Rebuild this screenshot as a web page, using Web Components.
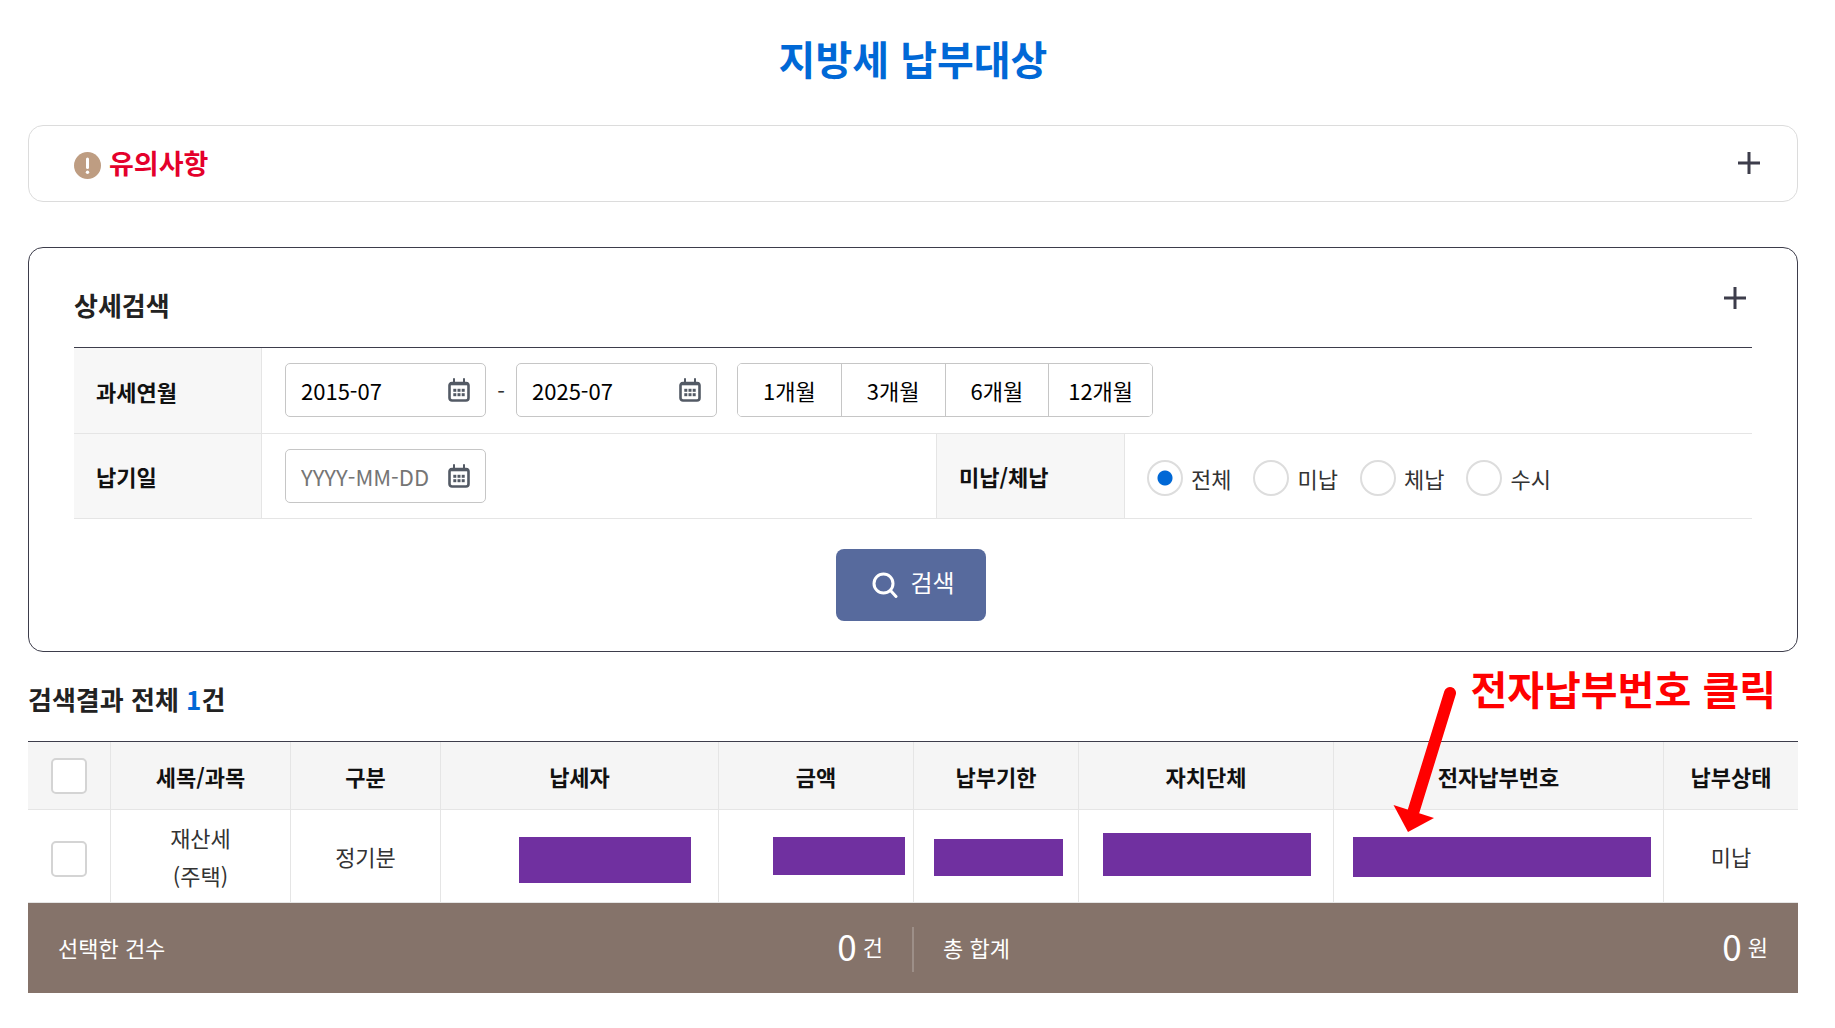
<!DOCTYPE html>
<html lang="ko">
<head>
<meta charset="utf-8">
<title>지방세 납부대상</title>
<style>
  body { margin: 0; background: #fff; color: #333; font: 22px/32px "Noto Sans CJK KR", "Noto Sans", sans-serif; }
</style>
</head>
<body>
<tax-page>
  <page-title slot="title">지방세 납부대상</page-title>
  <notice-panel>유의사항</notice-panel>
  <search-panel></search-panel>
  <result-section></result-section>
</tax-page>

<script>
  const define = (name, html, setup) => {
    const template = document.createElement('template');
    template.innerHTML = html;
    customElements.define(name, class extends HTMLElement {
      constructor() {
        super();
        this.attachShadow({ mode: 'open' }).append(template.content.cloneNode(true));
      }
      connectedCallback() {
        if (setup) setup(this, this.shadowRoot);
      }
    });
  };

  define('tax-page', `
    <style>
      :host { display: block; padding: 0 37px 35px 28px; }
      main { display: flex; flex-direction: column; }
    </style>
    <main><slot name="title"></slot><slot></slot></main>
  `);

  define('page-title', `
    <style>
      :host { display: block; padding: 28px 0 37px; text-align: center; }
      h1 { margin: 0; font-size: 40px; line-height: 60px; font-weight: 700; color: #0068d6; }
    </style>
    <h1><slot></slot></h1>
  `);

  define('plus-button', `
    <style>
      :host { display: block; }
      button { display: block; width: 22px; height: 22px; margin: 0; padding: 0; border: 0; background: none; cursor: pointer; }
      svg { display: block; }
    </style>
    <button type="button" aria-label="펼치기">
      <svg width="22" height="22" viewBox="0 0 22 22" stroke="#3d3d4b" stroke-width="3" fill="none"><path d="M0 11H22M11 0V22"/></svg>
    </button>
  `);

  define('notice-panel', `
    <style>
      :host { display: flex; align-items: center; box-sizing: border-box; height: 77px; margin-bottom: 45px; padding: 0 37px 2px 45px; border: 1px solid #dcdcdc; border-radius: 15px; }
      svg { display: block; margin: 5px 8px 0 0; }
      h2 { margin: 0; font-size: 27px; line-height: 40px; font-weight: 700; color: #e4002b; }
      plus-button { margin-left: auto; }
    </style>
    <svg width="27" height="27" viewBox="0 0 27 27"><circle cx="13.5" cy="13.5" r="13.5" fill="#be9d82"/><path d="M13.5 7V15.5" stroke="#fff" stroke-width="3" stroke-linecap="round"/><circle cx="13.5" cy="20.3" r="1.7" fill="#fff"/></svg>
    <h2><slot></slot></h2>
    <plus-button></plus-button>
  `);

  define('date-field', `
    <style>
      :host { display: block; }
      div { display: flex; align-items: center; box-sizing: border-box; width: 201px; height: 54px; padding: 0 15px; border: 1px solid #c6c6c6; border-radius: 5px; background: #fff; }
      input { flex: 1; min-width: 0; height: 50px; padding: 0; border: 0; outline: 0; background: none; color: #000; font: inherit; }
      input::placeholder { color: #757575; opacity: 1; }
      button { display: block; padding: 0; border: 0; background: none; cursor: pointer; }
      svg { display: block; }
    </style>
    <div>
      <input type="text">
      <button type="button" aria-label="달력 열기">
        <svg width="22" height="24" viewBox="0 0 22 24">
          <path d="M6 1V6M16 1V6" stroke="#535a65" stroke-width="2" stroke-linecap="round"/>
          <rect x="1.5" y="5" width="19" height="17.5" rx="2.5" fill="none" stroke="#535a65" stroke-width="2.6"/>
          <path d="M2 5.7H20" stroke="#535a65" stroke-width="3.200"/>
          <g fill="#535a65"><rect x="5.300" y="10.800" width="3" height="3"/><rect x="9.500" y="10.800" width="3" height="3"/><rect x="13.700" y="10.800" width="3" height="3"/><rect x="5.300" y="15.200" width="3" height="3"/><rect x="9.500" y="15.200" width="3" height="3"/><rect x="13.700" y="15.200" width="3" height="3"/></g>
        </svg>
      </button>
    </div>
  `, (host, root) => {
    const input = root.querySelector('input');
    input.value = host.getAttribute('value') || '';
    input.placeholder = host.getAttribute('placeholder') || '';
    input.setAttribute('aria-label', host.getAttribute('label'));
  });

  define('period-buttons', `
    <style>
      :host { display: block; }
      div { display: flex; box-sizing: border-box; width: 416px; height: 54px; border: 1px solid #c6c6c6; border-radius: 5px; overflow: hidden; }
      button { flex: 1; padding: 0; border: 0; background: #fff; color: #000; font: inherit; cursor: pointer; }
      button + button { border-left: 1px solid #c6c6c6; }
    </style>
    <div role="group" aria-label="기간 선택">
      <button type="button">1개월</button><button type="button">3개월</button><button type="button">6개월</button><button type="button">12개월</button>
    </div>
  `);

  define('status-radios', `
    <style>
      :host { display: block; padding-top: 4px; }
      fieldset { display: flex; gap: 22px; margin: 0; padding: 0; border: 0; }
      label { display: flex; align-items: center; gap: 8px; color: #333; }
      input { appearance: none; box-sizing: border-box; width: 36px; height: 36px; margin: 0; border: 2px solid #ddd; border-radius: 50%; background: #fff; }
      input:checked { background: radial-gradient(circle, #0068d6 7px, #fff 8px); }
    </style>
    <fieldset aria-label="미납/체납">
      <label><input type="radio" name="status" checked><span>전체</span></label>
      <label><input type="radio" name="status"><span>미납</span></label>
      <label><input type="radio" name="status"><span>체납</span></label>
      <label><input type="radio" name="status"><span>수시</span></label>
    </fieldset>
  `);

  define('search-button', `
    <style>
      :host { display: block; }
      button { display: flex; align-items: center; justify-content: center; gap: 12px; width: 150px; height: 72px; padding: 0 0 6px 5px; border: 0; border-radius: 8px; background: #576a9d; color: #fff; font: inherit; font-size: 24px; cursor: pointer; }
      svg { display: block; margin-top: 5px; }
    </style>
    <button type="submit">
      <svg width="26" height="26" viewBox="0 0 26 26" fill="none" stroke="#fff" stroke-width="3" stroke-linecap="round"><circle cx="11.5" cy="11.5" r="9.5"/><path d="M18.5 18.5L24 24.5"/></svg>
      <slot></slot>
    </button>
  `);

  define('search-panel', `
    <style>
      :host { display: block; padding: 0 45px 30px; border: 1px solid #3d3d4b; border-radius: 15px; }
      header { display: flex; justify-content: space-between; align-items: flex-start; padding: 37px 6px 22px 0; }
      h2 { margin: 0; font-size: 26px; line-height: 40px; font-weight: 700; color: #222; }
      plus-button { margin-top: 2px; }
      .fields { display: grid; grid-template-columns: 188px 674fr 189px 627fr; grid-auto-rows: minmax(85px, auto); border-top: 1px solid #3d3d4b; }
      .name, .value { display: flex; align-items: center; border-bottom: 1px solid #e5e5e5; }
      .name { box-sizing: border-box; padding-left: 22px; border-right: 1px solid #e5e5e5; background: #f7f7f7; color: #111; font-weight: 700; }
      .second { border-left: 1px solid #e5e5e5; }
      .value { padding: 15px 0 15px 23px; }
      .wide { grid-column: span 3; padding-bottom: 16px; }
      .dash { width: 30px; text-align: center; }
      status-radios { margin-left: -1px; }
      period-buttons { margin-left: 20px; }
      .submit { display: flex; justify-content: center; padding: 30px 4px 0 0; }
    </style>
    <header><h2>상세검색</h2><plus-button></plus-button></header>
    <form onsubmit="return false">
      <div class="fields">
        <div class="name">과세연월</div>
        <div class="value wide">
          <date-field label="과세연월 시작" value="2015-07"></date-field>
          <span class="dash">-</span>
          <date-field label="과세연월 끝" value="2025-07"></date-field>
          <period-buttons></period-buttons>
        </div>
        <div class="name">납기일</div>
        <div class="value"><date-field label="납기일" placeholder="YYYY-MM-DD"></date-field></div>
        <div class="name second">미납/체납</div>
        <div class="value"><status-radios></status-radios></div>
      </div>
      <div class="submit"><search-button>검색</search-button></div>
    </form>
  `);

  define('result-table', `
    <style>
      :host { display: block; }
      table { width: 100%; table-layout: fixed; border-collapse: separate; border-spacing: 0; border-top: 1px solid #3d3d4b; text-align: center; }
      th, td { box-sizing: border-box; padding: 0; border-right: 1px solid #e5e5e5; border-bottom: 1px solid #e5e5e5; }
      th:last-child, td:last-child { border-right: 0; }
      th { height: 68px; background: #f5f5f5; color: #111; font-weight: 700; }
      td { position: relative; height: 93px; line-height: 38px; }
      input { appearance: none; display: block; box-sizing: border-box; width: 36px; height: 36px; margin: 0 auto; border: 2px solid #d4d4d4; border-radius: 5px; background: #fff; }
      td input { position: relative; top: 3px; }
      .mask { position: absolute; background: #7030a0; }
      .payer { left: 78px; top: 27px; width: 172px; height: 46px; }
      .amount { left: 54px; top: 27px; width: 132px; height: 38px; }
      .due { left: 20px; top: 29px; width: 129px; height: 37px; }
      .office { left: 24px; top: 23px; width: 208px; height: 43px; }
      .number { left: 19px; top: 27px; width: 298px; height: 40px; }
    </style>
    <table>
      <colgroup>
        <col style="width:83px"><col style="width:180px"><col style="width:150px"><col style="width:278px"><col style="width:195px"><col style="width:165px"><col style="width:255px"><col style="width:330px"><col style="width:134px">
      </colgroup>
      <thead>
        <tr><th><input type="checkbox" aria-label="전체 선택"></th><th>세목/과목</th><th>구분</th><th>납세자</th><th>금액</th><th>납부기한</th><th>자치단체</th><th>전자납부번호</th><th>납부상태</th></tr>
      </thead>
      <tbody>
        <tr>
          <td><input type="checkbox" aria-label="재산세(주택) 선택"></td>
          <td>재산세<br>(주택)</td>
          <td>정기분</td>
          <td><span class="mask payer"></span></td>
          <td><span class="mask amount"></span></td>
          <td><span class="mask due"></span></td>
          <td><span class="mask office"></span></td>
          <td><span class="mask number"></span></td>
          <td>미납</td>
        </tr>
      </tbody>
    </table>
  `);

  define('total-item', `
    <style>
      :host { display: flex; flex: 1; align-items: center; justify-content: space-between; padding: 0 30px 2px; }
      .amount { display: flex; align-items: center; gap: 6px; padding-bottom: 2px; }
      strong { font-size: 35px; line-height: 44px; font-weight: 400; }
    </style>
    <slot></slot>
    <span class="amount"><strong></strong><span class="unit"></span></span>
  `, (host, root) => {
    root.querySelector('strong').textContent = host.getAttribute('amount');
    root.querySelector('.unit').textContent = host.getAttribute('unit');
  });

  define('total-bar', `
    <style>
      :host { display: flex; align-items: center; height: 90px; background: #85736a; color: #fff; }
      i { width: 2px; height: 45px; margin: 2px -1px 0; background: #9d8f88; }
    </style>
    <total-item amount="0" unit="건">선택한 건수</total-item>
    <i></i>
    <total-item amount="0" unit="원">총 합계</total-item>
  `);

  define('click-callout', `
    <style>
      :host { display: block; color: #f00; pointer-events: none; }
      p { position: absolute; right: 22px; top: 6px; margin: 0; font-size: 40px; line-height: 60px; font-weight: 700; white-space: nowrap; }
      svg { position: absolute; right: 340px; top: 34px; }
    </style>
    <p><slot></slot></p>
    <svg width="65" height="147" viewBox="0 0 65 147"><path d="M57 7L20 127" stroke="#f00" stroke-width="12" stroke-linecap="round"/><path d="M0.500 119L41 132L15 146Z" fill="#f00"/></svg>
  `);

  define('result-section', `
    <style>
      :host { display: block; position: relative; }
      h2 { margin: 0; padding: 27px 0 22px; font-size: 26px; line-height: 40px; font-weight: 700; color: #222; }
      em { font-style: normal; color: #0068d6; }
    </style>
    <h2>검색결과 전체 <em>1</em>건</h2>
    <result-table></result-table>
    <total-bar></total-bar>
    <click-callout>전자납부번호 클릭</click-callout>
  `);
</script>
</body>
</html>
